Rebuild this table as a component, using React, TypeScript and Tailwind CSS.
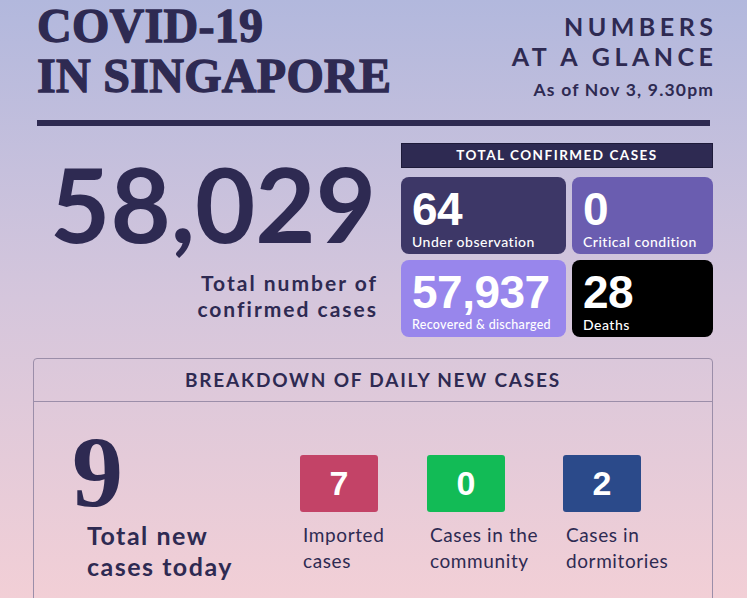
const navy = 'text-[#2e2a52]'

const stats = [
  { value: '64', label: 'Under observation', bg: 'bg-[#3d3767]', size: 'text-[14px] tracking-[0.5px]' },
  { value: '0', label: 'Critical condition', bg: 'bg-[#6a5db0]', size: 'text-[14px] tracking-[0.5px]' },
  { value: '57,937', label: 'Recovered & discharged', bg: 'bg-[#9886ec]', size: 'text-[12.5px] tracking-[0.3px]' },
  { value: '28', label: 'Deaths', bg: 'bg-black', size: 'text-[14px] tracking-[0.5px]' },
]

const daily = [
  { value: '7', label: ['Imported', 'cases'], bg: 'bg-[#c34367]' },
  { value: '0', label: ['Cases in the', 'community'], bg: 'bg-[#12bb56]' },
  { value: '2', label: ['Cases in', 'dormitories'], bg: 'bg-[#2b4a8a]' },
]

export default function App() {
  return (
    <div
      className={`w-[747px] h-[598px] overflow-hidden bg-gradient-to-b from-[#b2b8dd] via-[#d5c6dc] to-[#f2cfd6] ${navy} font-['Lato','Noto_Sans',sans-serif]`}
    >
      {/* Header */}
      <div className="flex justify-between pl-[37px] pr-[34px] pt-[1px]">
        <h1 className="font-['Liberation_Serif',serif] font-bold text-[48px] leading-[50px] tracking-[0.3px] [-webkit-text-stroke:1.3px_#2e2a52]">
          COVID-19
          <br />
          IN SINGAPORE
        </h1>
        <div className="text-right pt-[10px]">
          <div className="font-bold text-[25px] leading-[30px] tracking-[4.5px] mr-[-4.5px]">NUMBERS</div>
          <div className="font-bold text-[25px] leading-[30px] tracking-[4.5px] mr-[-4.5px]">AT A GLANCE</div>
          <div className="font-bold text-[17.5px] leading-[20px] tracking-[1.2px] mr-[-1.2px] mt-[9px]">
            As of Nov 3, 9.30pm
          </div>
        </div>
      </div>

      <div className="mx-[37px] mt-[19px] h-[6px] bg-[#2e2a52]" />

      {/* Total confirmed */}
      <div className="flex mt-[17px] pr-[34px]">
        <div className="w-[376px] flex flex-col items-end">
          <div className="font-bold text-[104px] leading-[105px] mt-[7px]">58,029</div>
          <div className="text-right font-bold text-[21px] leading-[26px] tracking-[2px] mr-[-2px] mt-[15px]">
            Total number of
            <br />
            confirmed cases
          </div>
        </div>
        <div className="ml-[25px] flex-1">
          <div className="h-[25px] bg-[#2e2a52] border border-[#1e1b3a] flex items-center justify-center text-white font-bold text-[13.5px] tracking-[1.5px]">
            TOTAL CONFIRMED CASES
          </div>
          <div className="grid grid-cols-[165px_1fr] gap-[6px] mt-[9px]">
            {stats.map((s) => (
              <div key={s.label} className={`${s.bg} h-[77px] rounded-[8px] px-[11px] pt-[7px] text-white`}>
                <div className="font-['Liberation_Sans',Arial,sans-serif] font-bold text-[46px] leading-[50px] tracking-[-0.5px]">
                  {s.value}
                </div>
                <div className={`${s.size} leading-[16px] font-medium whitespace-nowrap`}>{s.label}</div>
              </div>
            ))}
          </div>
        </div>
      </div>

      {/* Daily breakdown */}
      <div className="mx-[33px] mr-[34px] mt-[21px] border border-[#9b8ea9] rounded-[4px] h-[260px]">
        <div className="h-[43px] border-b border-[#9b8ea9] flex items-center justify-center font-bold text-[19px] tracking-[1.8px]">
          BREAKDOWN OF DAILY NEW CASES
        </div>
        <div className="flex pt-[25px]">
          <div className="w-[266px] pl-[38px]">
            <div className="font-['Liberation_Serif',serif] font-bold text-[102px] leading-[92px]">9</div>
            <div className="font-bold text-[25px] leading-[31px] tracking-[1.5px] pl-[15px] mt-[1px]">
              Total new
              <br />
              cases today
            </div>
          </div>
          <div className="flex pt-[28px]">
            {daily.map((d, i) => (
              <div key={d.value + i} className={i === 0 ? 'w-[127px]' : i === 1 ? 'w-[136px]' : ''}>
                <div
                  className={`${d.bg} w-[78px] h-[57px] rounded-[3px] flex items-center justify-center text-white font-['Liberation_Sans',Arial,sans-serif] font-bold text-[34px]`}
                >
                  {d.value}
                </div>
                <div className="text-[19px] leading-[26px] tracking-[0.6px] mt-[10px] pl-[3px] whitespace-nowrap">
                  {d.label[0]}
                  <br />
                  {d.label[1]}
                </div>
              </div>
            ))}
          </div>
        </div>
      </div>
    </div>
  )
}
